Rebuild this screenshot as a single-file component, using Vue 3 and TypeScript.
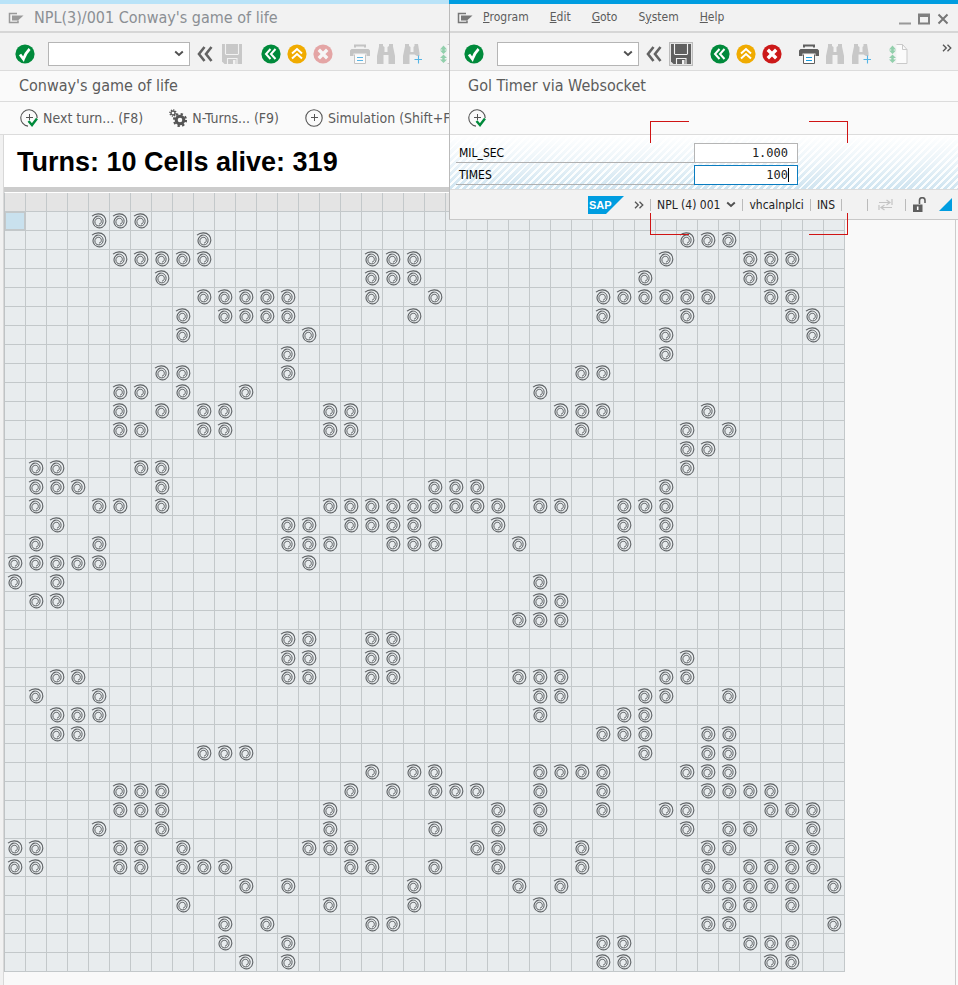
<script setup lang="ts">
import { ref } from 'vue'

interface ToolItem {
  icon: string
  label: string
  disabled?: boolean
  boxed?: boolean
  start?: boolean
}

const COLUMNS = 40

// Live cells per row; "a-b" stands for an inclusive run of columns.
const generation: string[] = [
  '4-6',
  '4 9 32-34',
  '5-9 17-19 31 35-37',
  '7 17-19 30 35 36',
  '9-13 17 20 28-33 36 37',
  '8 10-13 19 28 32 37 38',
  '8 14 31 38',
  '13 31',
  '7 8 13 27 28',
  '5 6 8 11 25',
  '5 7 9 10 15 16 26-28 33',
  '5 6 9 10 15 16 27 32 34',
  '32 33',
  '1 2 6 7 32',
  '1-3 7 20-22 31',
  '1 4 5 7 15-23 25 26 29-31',
  '2 13 14 16-19 23 29 31',
  '1 4 13-15 18-20 24 29 31',
  '0-4 14',
  '0 2 25',
  '1 2 25 26',
  '24-26',
  '13 14 17 18',
  '13 14 17 18 32',
  '2 3 13 14 17 18 24-26 31 32',
  '1 4 25 26 30 31 34',
  '2-4 25 29 30',
  '2 3 28-30 33 34',
  '9-11 30 33 34',
  '17 19 20 25-28 32-34',
  '5-7 16 18 20-22 25 28 33-36',
  '5-7 15 23 25 28 31 32 36-38',
  '4 7 15 20 23 25 32 34 35 38',
  '0 1 5 6 8 14-16 22 23 27 33 34 37 38',
  '0 1 5 6 8-10 16 17 20 23 27 33 35-38',
  '11 13 19 24 26 33-37 39',
  '8 15 19 25 34 35 37',
  '10 12 17 18 33 34 39',
  '10 13 28 29 35-37',
  '11 13 28 29 36 37',
]

function expand(row: string): boolean[] {
  const cells: boolean[] = Array(COLUMNS).fill(false)
  for (const part of row.split(' ')) {
    const [from, to = from] = part.split('-').map(Number)
    for (let c = from; c <= to; c++) cells[c] = true
  }
  return cells
}

const rows = generation.map(expand)

function tools(modal: boolean): ToolItem[] {
  return [
    { icon: 'save', label: 'Save', disabled: !modal, boxed: modal },
    { icon: 'back', label: 'Back', start: true },
    { icon: 'exit', label: 'Exit' },
    { icon: 'cancel', label: 'Cancel', disabled: !modal },
    { icon: 'print', label: 'Print', disabled: !modal, start: true },
    { icon: 'find', label: 'Find', disabled: true },
    { icon: 'findnext', label: 'Find next', disabled: true },
    { icon: 'page', label: 'First page', disabled: true, start: true },
  ]
}

const mainTools = tools(false)
const timerTools = tools(true)

const menus = [
  { key: 'P', rest: 'rogram', pre: '' },
  { key: 'E', rest: 'dit', pre: '' },
  { key: 'G', rest: 'oto', pre: '' },
  { key: 'y', rest: 'stem', pre: 'S' },
  { key: 'H', rest: 'elp', pre: '' },
]

const millis = ref('1.000')
const times = ref('100')
</script>

<template>
  <div class="desktop">
    <svg class="sprite" aria-hidden="true">
      <symbol id="i-menu" viewBox="0 0 16 12">
        <path d="M9 1.500H1.500v9H10V8.500" fill="none" stroke="currentColor" stroke-width="1.500" />
        <path d="M4 3.500h11.500L10 8.500H4z" fill="currentColor" />
      </symbol>
      <symbol id="i-ok" viewBox="0 0 20 20">
        <circle cx="10" cy="10" r="9.600" fill="#008a3b" />
        <path d="M5 10.500l3.400 4.600C9.800 11 11.800 7.800 14.600 5" fill="none" stroke="#fff" stroke-width="2.800" />
      </symbol>
      <symbol id="i-collapse" viewBox="0 0 18 18">
        <path d="M8.500 2L3 9l5.500 7M15.500 2L10 9l5.500 7" fill="none" stroke="#636363" stroke-width="2.600" />
      </symbol>
      <symbol id="i-save" viewBox="0 0 20 20">
        <path d="M0 0h20v20H2.500L0 17.500z" fill="currentColor" />
        <path d="M3.500 0v10M16.500 0v10M3.500 10.500h13M5.500 20v-5.500h9.500V20" fill="none" stroke="#f2f2f2" stroke-width="1.100" />
        <path d="M11 16h2.500v4H11z" fill="#f2f2f2" />
      </symbol>
      <symbol id="i-back" viewBox="0 0 20 20">
        <circle cx="10" cy="10" r="9.600" fill="#008a3b" />
        <path d="M9.500 5L5 10l4.500 5M14.500 5L10 10l4.500 5" fill="none" stroke="#fff" stroke-width="2" />
      </symbol>
      <symbol id="i-exit" viewBox="0 0 20 20">
        <circle cx="10" cy="10" r="9.600" fill="#f0ab00" />
        <path d="M5 9.500L10 5l5 4.500M5 14.500L10 10l5 4.500" fill="none" stroke="#fff" stroke-width="2" />
      </symbol>
      <symbol id="i-cancel" viewBox="0 0 20 20">
        <circle cx="10" cy="10" r="9.600" fill="#cc1919" />
        <path d="M5.800 5.800l8.400 8.400M14.200 5.800l-8.400 8.400" stroke="#fff" stroke-width="3.400" />
      </symbol>
      <symbol id="i-print" viewBox="0 0 20 20">
        <path d="M5 3.500V1.500h10v2" fill="none" stroke="currentColor" stroke-width="2" />
        <path d="M1.500 5h17L20 6.500V12h-3.500V9.500h-13V12H0V6.500z" fill="currentColor" />
        <path d="M4.500 10.500v9h11v-9" fill="#fff" stroke="currentColor" stroke-width="1" />
        <path d="M7 13.500h6M7 16.500h6" stroke="#1a9ee0" stroke-width="1.200" />
      </symbol>
      <symbol id="i-find" viewBox="0 0 20 20">
        <path d="M3 0h4v2l1.500 1v5h3V3L13 2V0h4v2.500L19 12v8h-6.500v-9h-5v9H1v-8L3 2.500z" fill="currentColor" />
      </symbol>
      <symbol id="i-findnext" viewBox="0 0 20 20">
        <path d="M3 0h4v2l1.500 1v5h3V3L12.500 2V0H16l1.500 9v3H15l-2.500-1.500h-5V20H1v-8L3 2.500z" fill="currentColor" />
        <path d="M16.500 11.500v8M12.500 15.500h7.500" stroke="#55b5e6" stroke-width="1.100" />
      </symbol>
      <symbol id="i-page" viewBox="0 0 20 20">
        <path d="M8.500 .5h6l4.500 5v14H8.500" fill="#fbfbfb" stroke="#c9c9c9" />
        <path d="M14.500 .5v5h4.500" fill="none" stroke="#c9c9c9" />
        <path d="M4.500 1.500L8 5.500H5.700v1H8L4.500 10 1 6.500h2.300v-1H1zM4.500 10.500L8 14H5.700v1.500H8L4.500 19 1 15.500h2.300V14H1z" fill="#92cfac" />
      </symbol>
      <symbol id="i-more" viewBox="0 0 10 8">
        <path d="M1 .7L4.300 4 1 7.300M5.500 .7L8.800 4 5.500 7.300" fill="none" stroke="#555" stroke-width="1.300" />
      </symbol>
      <symbol id="i-clock" viewBox="0 0 18 18">
        <circle cx="9" cy="9" r="8.200" fill="none" stroke="#555" stroke-width="1.100" />
        <path d="M9.500 5v7M6 8.500h7" stroke="#555" stroke-width="1" />
      </symbol>
      <symbol id="i-clockrun" viewBox="0 0 18 18">
        <path d="M8 17.100A8.200 8.200 0 1 1 17.200 9" fill="none" stroke="#555" stroke-width="1.100" />
        <path d="M9.500 5v6M6 8.500h7" stroke="#555" stroke-width="1" />
        <path d="M8.500 12l3.500 4 5-6.500" fill="none" stroke="#008a3b" stroke-width="2.400" />
      </symbol>
      <symbol id="i-gears" viewBox="0 0 18 18">
        <circle cx="11" cy="11" r="3.800" fill="none" stroke="#555" stroke-width="3" />
        <circle cx="11" cy="11" r="6" fill="none" stroke="#555" stroke-width="2.200" stroke-dasharray="2.300 2.400" />
        <circle cx="4" cy="4" r="2" fill="none" stroke="#555" stroke-width="1.300" />
        <circle cx="4" cy="4" r="3.100" fill="none" stroke="#555" stroke-width="1.300" stroke-dasharray="1.200 1.200" />
      </symbol>
      <symbol id="i-cell" viewBox="0 0 16 16">
        <path
          d="M1 3.200C4.500 .2 10 0 13 3.200c2.800 3.400 2.300 8.500-1.300 10.700-3.500 2-8 .7-9.300-3C1.200 7.700 3 4.300 6.300 3.300"
          fill="none" stroke="#5b5f62" stroke-width="1.100"
        />
        <path
          d="M4.500 3.600c4-1.600 7.600.9 7.600 4.600 0 2.900-1.900 4.700-4.300 4.700-2.500 0-4-1.800-3.900-4.200.1-2.200 1.800-3.500 3.800-3.400 1.700.1 2.700 1.400 2.600 3.200-.1 1.500-1 2.500-2.300 2.500"
          fill="none" stroke="#5b5f62" stroke-width="1"
        />
      </symbol>
      <symbol id="i-lock" viewBox="0 0 15 16">
        <path d="M1 7.500h9.500V15H1z" fill="#5f5f5f" />
        <path d="M7.500 7V3.500a2.700 2.700 0 0 1 5.500 0V6" fill="none" stroke="#5f5f5f" stroke-width="1.600" />
        <path d="M5.700 9.500v3.500" stroke="#fff" stroke-width="1.600" />
      </symbol>
      <symbol id="i-swap" viewBox="0 0 15 12">
        <path d="M1 3.500h10M8.500 1L12 3.500 8.500 6M14 0v6M14 8.500H4M6.500 6L3 8.500 6.500 11M1 6v5" fill="none" stroke="#c4c4c4" stroke-width="1.200" />
      </symbol>
      <symbol id="i-down" viewBox="0 0 10 7">
        <path d="M1.200 1.500L5 5l3.800-3.500" fill="none" stroke="#505050" stroke-width="1.900" />
      </symbol>
    </svg>

    <main class="main-window">
      <header class="caption main-caption">
        <svg class="menu-icon"><use href="#i-menu" /></svg>
        <span>NPL(3)/001 Conway's game of life</span>
      </header>
      <div class="toolbar">
        <button class="tool" aria-label="Enter"><svg><use href="#i-ok" /></svg></button>
        <label class="command">
          <select aria-label="Command field"><option></option></select>
          <svg class="arrow"><use href="#i-down" /></svg>
        </label>
        <button class="collapse" aria-label="Hide command field"><svg><use href="#i-collapse" /></svg></button>
        <button
          v-for="t in mainTools" :key="t.icon" :aria-label="t.label" :disabled="t.disabled"
          :class="['tool', t.icon, { boxed: t.boxed, start: t.start }]"
        >
          <svg><use :href="'#i-' + t.icon" /></svg>
        </button>
      </div>
      <h1 class="title">Conway's game of life</h1>
      <div class="actions">
        <button><svg><use href="#i-clockrun" /></svg>Next turn... (F8)</button>
        <button><svg><use href="#i-gears" /></svg>N-Turns... (F9)</button>
        <button><svg><use href="#i-clock" /></svg>Simulation (Shift+F9)</button>
      </div>
      <p class="summary">Turns: 10 Cells alive: 319</p>
      <div class="grid-area">
        <table class="cells" aria-label="Cells">
          <thead>
            <tr><th v-for="c in COLUMNS" :key="c"></th></tr>
          </thead>
          <tbody>
            <tr v-for="(row, r) in rows" :key="r">
              <td v-for="(alive, c) in row" :key="c" :class="{ cursor: r === 0 && c === 0 }">
                <svg v-if="alive"><use href="#i-cell" /></svg>
              </td>
            </tr>
          </tbody>
        </table>
      </div>
    </main>

    <section class="timer-window" aria-label="Gol Timer via Websocket">
      <header class="caption">
        <svg class="menu-icon"><use href="#i-menu" /></svg>
        <nav>
          <button v-for="m in menus" :key="m.key">{{ m.pre }}<u>{{ m.key }}</u>{{ m.rest }}</button>
        </nav>
        <div class="window-buttons">
          <button aria-label="Minimize"><svg viewBox="0 0 12 12"><path d="M0 10.500h12" stroke="#999" stroke-width="2" /></svg></button>
          <button aria-label="Maximize"><svg viewBox="0 0 12 12"><path d="M1 1.500h10v9H1zM1 3h10" fill="none" stroke="#808080" stroke-width="2" /></svg></button>
          <button aria-label="Close"><svg viewBox="0 0 12 12"><path d="M1.500 1.500l9 9M10.500 1.500l-9 9" stroke="#777" stroke-width="2" /></svg></button>
        </div>
      </header>
      <div class="toolbar">
        <button class="tool" aria-label="Enter"><svg><use href="#i-ok" /></svg></button>
        <label class="command">
          <select aria-label="Command field"><option></option></select>
          <svg class="arrow"><use href="#i-down" /></svg>
        </label>
        <button class="collapse" aria-label="Hide command field"><svg><use href="#i-collapse" /></svg></button>
        <button
          v-for="t in timerTools" :key="t.icon" :aria-label="t.label" :disabled="t.disabled"
          :class="['tool', t.icon, { boxed: t.boxed, start: t.start }]"
        >
          <svg><use :href="'#i-' + t.icon" /></svg>
        </button>
        <button class="overflow" aria-label="More"><svg><use href="#i-more" /></svg></button>
      </div>
      <h2 class="title">Gol Timer via Websocket</h2>
      <div class="actions">
        <button aria-label="Execute"><svg><use href="#i-clockrun" /></svg></button>
      </div>
      <form class="fields" @submit.prevent>
        <div class="field">
          <label for="mil-sec">MIL_SEC</label>
          <input id="mil-sec" v-model="millis" type="text" />
        </div>
        <div class="field active">
          <label for="times">TIMES</label>
          <input id="times" v-model="times" type="text" />
          <i class="caret"></i>
        </div>
      </form>
      <footer class="status">
        <svg class="sap" viewBox="0 0 36 18">
          <path d="M0 0h36L18 18H0z" fill="#009de0" />
          <text x="1" y="13">SAP</text>
        </svg>
        <svg class="more"><use href="#i-more" /></svg>
        <span class="sep"></span>
        <button class="system">NPL (4) 001<svg><use href="#i-down" /></svg></button>
        <span class="sep"></span>
        <span>vhcalnplci</span>
        <span class="sep"></span>
        <span>INS</span>
        <span class="sep"></span>
        <span class="sep wide"></span>
        <svg class="swap"><use href="#i-swap" /></svg>
        <span class="sep"></span>
        <svg class="lock"><use href="#i-lock" /></svg>
        <svg class="grip" viewBox="0 0 13 13"><path d="M13 0v13H0z" fill="#009de0" /></svg>
      </footer>
    </section>

    <div class="highlight" aria-hidden="true">
      <i class="tl"></i><i class="tr"></i><i class="bl"></i><i class="br"></i>
    </div>
  </div>
</template>

<style>
body {
  background: #fafafa;
}
</style>

<style scoped>
.desktop {
  position: relative;
  min-height: 100vh;
  overflow: hidden;
  display: flex;
  font-family: "DejaVu Sans Condensed", "DejaVu Sans", sans-serif;
  font-stretch: condensed;
  font-size: 14px;
  color: #5c5c5c;
}
.sprite {
  position: absolute;
  width: 0;
  height: 0;
}
button {
  padding: 0;
  border: 0;
  background: none;
  color: inherit;
  font: inherit;
  display: flex;
  align-items: center;
}
svg {
  display: block;
  flex: none;
}
.main-window {
  flex: 1;
  min-width: 0;
  box-sizing: border-box;
  margin-right: 2px;
  border-top: 4px solid #b9e3f8;
  border-right: 1px solid #ccc;
  background: linear-gradient(90deg, #f1f1f1 3px, #d8d8d8 3px 4px, #f9f9f9 4px);
}
.caption {
  display: flex;
  align-items: center;
  height: 27px;
  padding-left: 8px;
  background: #f2f2f2;
  border-bottom: 2px solid #d6d6d6;
}
.main-caption {
  font-size: 16px;
  color: #8b8f94;
  gap: 10px;
}
.menu-icon {
  width: 16px;
  height: 12px;
  color: #777;
}
.main-caption .menu-icon {
  color: #999;
}
.toolbar {
  display: flex;
  align-items: center;
  gap: 6px;
  height: 33px;
  padding: 4px 0 0 15px;
  overflow: hidden;
  background: #f2f2f2;
  border-bottom: 1px solid #dcdcdc;
}
.tool {
  flex: none;
}
.tool svg {
  width: 20px;
  height: 20px;
}
.tool:disabled {
  color: #c8c8c8;
}
.tool:disabled.cancel {
  opacity: .35;
}
.tool:disabled.print {
  color: #b0b0b0;
  opacity: .7;
}
.tool.print:not(:disabled),
.tool.save:not(:disabled) {
  color: #5f5f5f;
}
.tool.start {
  margin-left: 11px;
}
.tool.save {
  justify-content: center;
  width: 24px;
  height: 24px;
  box-sizing: border-box;
}
.tool.boxed {
  border: 1px solid #bbb;
  background: #e4e4e4;
}
.command {
  position: relative;
  flex: none;
  margin-left: 7px;
}
.command select {
  appearance: none;
  display: block;
  width: 142px;
  height: 24px;
  border: 1px solid #b5b5b5;
  border-radius: 0;
  background: #fff;
}
.arrow {
  position: absolute;
  right: 6px;
  top: 8px;
  width: 10px;
  height: 7px;
}
.collapse {
  flex: none;
}
.collapse svg {
  width: 18px;
  height: 18px;
}
.overflow {
  align-self: flex-start;
  margin: 7px 6px 0 auto;
}
.overflow svg,
.more {
  width: 10px;
  height: 8px;
}
.title {
  margin: 0;
  padding-left: 19px;
  font-size: 16px;
  font-weight: 400;
  line-height: 30px;
  background: #fafafa;
  border-bottom: 1px solid #dcdcdc;
}
.actions {
  display: flex;
  align-items: center;
  gap: 26px;
  height: 32px;
  padding-left: 20px;
  background: #fafafa;
  border-bottom: 1px solid #dcdcdc;
}
.timer-window .actions {
  padding-left: 19px;
}
.actions button {
  gap: 5px;
  white-space: nowrap;
}
.actions svg {
  width: 18px;
  height: 18px;
}
.summary {
  margin: 0 0 0 4px;
  padding: 2px 0 0 13px;
  font: bold 27px/50px "Liberation Sans", Arial, sans-serif;
  color: #000;
  background: #fff;
  border-bottom: 5px solid #ccc;
}
.grid-area {
  margin-left: 4px;
  border-top: 1px solid #fff;
  border-left: 1px solid #bfc3c5;
}
.cells {
  table-layout: fixed;
  border-spacing: 0;
}
.cells th,
.cells td {
  box-sizing: border-box;
  width: 21px;
  min-width: 21px;
  height: 19px;
  padding: 0 0 1px 2px;
  border-right: 1px solid #c3c8ca;
  border-bottom: 1px solid #c3c8ca;
  background: #e8ecee;
  line-height: 0;
}
.cells th {
  background: #e4e4e4;
}
.cells td.cursor {
  background: #c9e1ee;
  box-shadow: inset 0 0 0 1px #c3c8ca;
}
.cells svg {
  width: 16px;
  height: 16px;
}
.timer-window {
  position: absolute;
  top: 0;
  left: 449px;
  right: 0;
  border-top: 4px solid #009de0;
  border-bottom: 1px solid #c8c8c8;
  background: #f9f9f9;
}
.timer-window::before {
  content: "";
  position: absolute;
  inset: 0 auto 0 0;
  width: 1px;
  background: #bbb;
}
.timer-window .caption {
  font-size: 12px;
}
nav {
  display: flex;
  gap: 21px;
  margin: 0 0 2px 10px;
}
.window-buttons {
  display: flex;
  gap: 7px;
  margin: 3px 9px 0 auto;
}
.window-buttons svg {
  width: 12px;
  height: 12px;
}
.fields {
  display: flex;
  flex-direction: column;
  gap: 2px;
  padding: 8px 2px 4px 7px;
  background:
    linear-gradient(180deg, #fff 0%, #fff9 50%, #fff0 100%),
    repeating-linear-gradient(135deg, #fafdfe 0 2px, #cfe4f0 2px 5px);
}
.field {
  position: relative;
  display: flex;
  color: #000;
  font-size: 12px;
}
.field label {
  width: 235px;
  padding: 1px 0 0 3px;
  line-height: 18px;
  border-bottom: 1px solid #b0b0b0;
}
.field input {
  box-sizing: border-box;
  width: 104px;
  height: 20px;
  padding: 0 9px 0 4px;
  border: 1px solid #b5b5b5;
  background: #fff;
  text-align: right;
  font: 12px "DejaVu Sans Mono", monospace;
  color: #222;
}
.field.active input {
  border-color: #0a7cc0;
}
.caret {
  position: absolute;
  left: 332px;
  top: 3px;
  width: 1px;
  height: 14px;
  background: #000;
}
.status {
  display: flex;
  align-items: center;
  justify-content: flex-end;
  gap: 6px;
  height: 29px;
  padding-right: 6px;
  font-size: 12px;
  color: #222;
  background: #f2f2f2;
  border-top: 1px solid #dcdcdc;
}
.sap {
  width: 36px;
  height: 18px;
}
.sap text {
  font: bold 11px "Liberation Sans", Arial, sans-serif;
  fill: #fff;
}
.more {
  margin-left: 4px;
}
.system {
  gap: 6px;
}
.system svg {
  width: 10px;
  height: 7px;
}
.sep {
  width: 1px;
  height: 12px;
  background: #bbb;
}
.sep.wide {
  margin-left: 19px;
}
.swap {
  width: 15px;
  height: 12px;
  margin: 0 6px 0 4px;
}
.lock {
  width: 15px;
  height: 16px;
}
.grip {
  width: 13px;
  height: 13px;
  margin-left: 6px;
}
.highlight {
  position: absolute;
  left: 650px;
  top: 121px;
  width: 198px;
  height: 114px;
  pointer-events: none;
}
.highlight i {
  position: absolute;
  box-sizing: border-box;
  width: 39px;
  height: 22px;
  border: 0 solid #d01414;
}
.highlight .tl {
  top: 0;
  left: 0;
  border-width: 1px 0 0 1px;
}
.highlight .tr {
  top: 0;
  right: 0;
  border-width: 1px 1px 0 0;
}
.highlight .bl {
  bottom: 0;
  left: 0;
  border-width: 0 0 1px 1px;
}
.highlight .br {
  bottom: 0;
  right: 0;
  border-width: 0 1px 1px 0;
}
</style>
